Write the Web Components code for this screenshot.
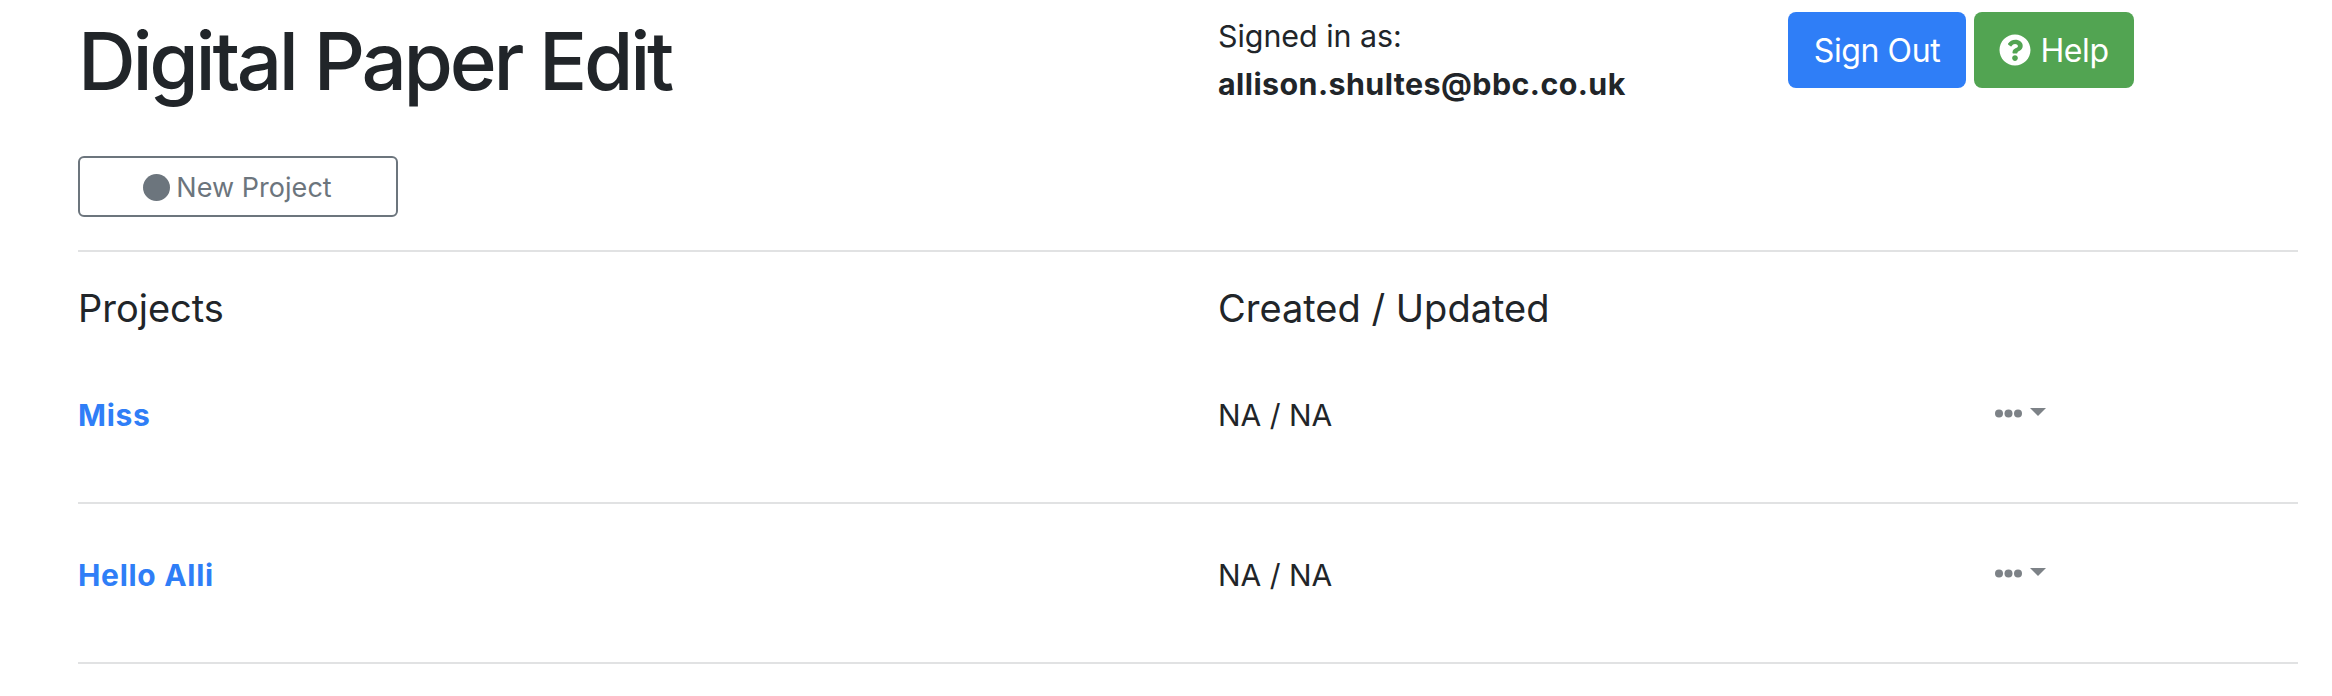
<!DOCTYPE html>
<html lang="en"><head><meta charset="utf-8"><title>Digital Paper Edit</title>
<style>html,body{margin:0;background:#fff;color:#212529;font-family:Inter,"Liberation Sans",sans-serif}</style>
</head><body>
<dpe-app>
  <dpe-header slot="header"></dpe-header>
  <dpe-new-button slot="action">New Project</dpe-new-button>
  <dpe-list-head slot="list"></dpe-list-head>
  <dpe-project-row slot="list" name="Miss" dates="NA / NA"></dpe-project-row>
  <dpe-project-row slot="list" name="Hello Alli" dates="NA / NA"></dpe-project-row>
</dpe-app>
<script>
const el=(name,html)=>customElements.define(name,class extends HTMLElement{
  connectedCallback(){ if(this.shadowRoot)return; const s=this.attachShadow({mode:'open'});
    s.innerHTML=html.replace(/\{(\w+)\}/g,(m,k)=>this.getAttribute(k)??''); }
});
el('dpe-app',`<style>:host{display:block;padding:0 34px 0 78px}
.a{display:block;margin-bottom:33px}
.l{display:block;border-top:2px solid #e1e2e3}</style>
<slot name="header"></slot><div class="a"><slot name="action"></slot></div><div class="l"><slot name="list"></slot></div>`);
el('dpe-header',`<style>:host{display:grid;grid-template-columns:1140px 1fr;height:156px}
h1{margin:0;font-size:80px;line-height:96px;font-weight:450;padding-top:13px;letter-spacing:-3.3px}
.u{font-size:30.400px;line-height:48px;padding-top:12px;letter-spacing:-.02px}
.u b{display:block;font-weight:700;letter-spacing:.43px}
.r{display:flex;justify-content:space-between}
.b{display:flex;gap:8px;align-items:flex-start;padding:12px 164px 0 0}
dpe-pill{flex:none}</style>
<h1>Digital Paper Edit</h1>
<div class="r"><div class="u">Signed in as:<b>allison.shultes@bbc.co.uk</b></div>
<div class="b"><dpe-pill style="--bg:#2f7ef7;--w:178px">Sign Out</dpe-pill><dpe-pill style="--bg:#52a452;--w:160px"><svg width="32" height="32" viewBox="0 0 512 512" fill="#fff" style="margin-right:9px;flex:none"><path d="M504 256c0 137-111 248-248 248S8 393 8 256 119 8 256 8s248 111 248 248zM262.700 90c-54.500 0-89.300 23-116.600 63.800-3.500 5.300-2.400 12.400 2.700 16.300l34.700 26.300c5.200 3.900 12.600 3 16.700-2.100 17.900-22.700 30.100-35.800 57.300-35.800 20.400 0 45.700 13.100 45.700 33 0 15-12.400 22.700-32.600 34-23.600 13.200-54.800 29.700-54.800 70.900V300c0 6.600 5.400 12 12 12h56c6.600 0 12-5.400 12-12v-1.300c0-28.600 83.400-29.700 83.400-107.100C384.200 133.300 323.700 90 262.700 90zM256 339.200c-25.400 0-46.100 20.700-46.100 46.100 0 25.400 20.700 46.100 46.100 46.100s46.100-20.700 46.100-46.100c0-25.400-20.700-46.100-46.100-46.100z"/></svg>Help</dpe-pill></div></div>`);
el('dpe-pill',`<style>:host{display:inline-flex;align-items:center;justify-content:center;box-sizing:border-box;width:var(--w);height:76px;background:var(--bg);color:#fff;border-radius:8px;font-size:32px;letter-spacing:-.4px}</style><slot></slot>`);
el('dpe-new-button',`<style>:host{display:flex;align-items:center;justify-content:center;box-sizing:border-box;width:320px;height:61px;border:2px solid #6c757d;border-radius:6px;color:#6c757d;font-size:27px;gap:6px;padding:2px 1px 0 0;letter-spacing:.05px}
i{width:27px;height:27px;border-radius:50%;background:#6c757d;display:block;margin-top:-1px}</style><i></i><span><slot></slot></span>`);
el('dpe-list-head',`<style>:host{display:grid;grid-template-columns:1140px 1fr;box-sizing:border-box;font-size:38px;line-height:54px;padding-top:29px;height:92px}</style><div>Projects</div><div>Created / Updated</div>`);
el('dpe-project-row',`<style>:host{display:grid;grid-template-columns:1140px 777px 1fr;box-sizing:border-box;height:160px;border-bottom:2px solid #e1e2e3;padding-top:48px;font-size:30px;align-items:start}
a{color:#2f7ef7;font-weight:700;text-decoration:none;letter-spacing:.7px}
div,a{line-height:46px}
.m{display:flex;align-items:center;gap:8px;height:42px}
</style>
<a href="#">{name}</a><div>{dates}</div>
<div class="m"><svg width="27" height="9" viewBox="0 0 27 9" fill="#7d8287"><circle cx="4" cy="4.500" r="4"/><circle cx="13.500" cy="4.500" r="4"/><circle cx="23" cy="4.500" r="4"/></svg><svg width="16" height="8" viewBox="0 0 16 8" fill="#7d8287" style="margin-top:-2px"><path d="M0 0h16L8 8z"/></svg></div>`);
</script>
</body></html>
